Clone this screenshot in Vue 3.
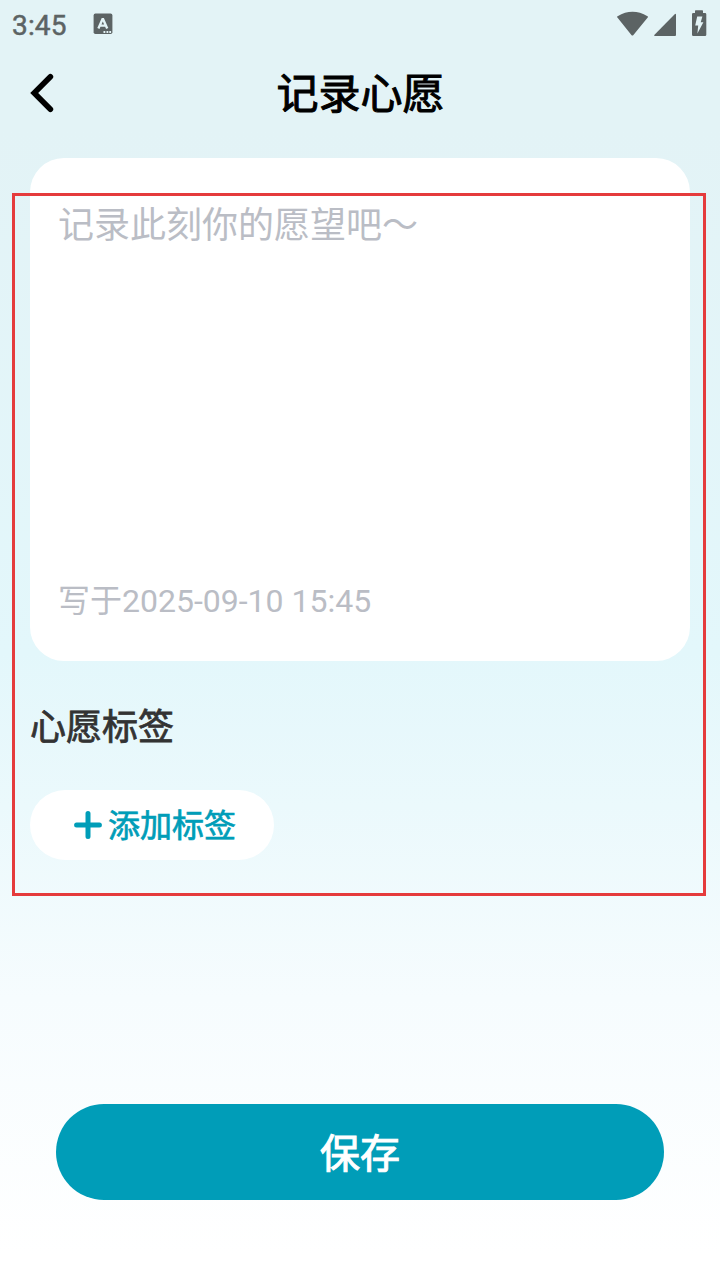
<script setup>
import { ref } from 'vue'

const time = ref('3:45')
const writtenAt = ref('2025-09-10 15:45')
</script>

<template>
  <div class="screen">
    <div class="status">
      <span class="clock">{{ time }}</span>
      <svg class="ime" width="20" height="22" viewBox="0 0 20 22">
        <rect x="0.6" y="0.6" width="18.8" height="20.4" rx="1.8" fill="#5c6364" />
        <path d="M5.4 15.6 L9.8 5.6 L14.2 15.6 M7 12.6 H12.6" fill="none" stroke="#e3f3f6" stroke-width="2.4" stroke-linejoin="bevel" />
        <path d="M10.5 19 h1.8 M13.5 19 h1.8 M16.3 19 h1.8" stroke="#e3f3f6" stroke-width="1.8" />
      </svg>
      <span class="spacer"></span>
      <svg class="indicators" width="92" height="30" viewBox="616 8 92 30">
        <path d="M617.4 17.6 Q616.6 16.8 617.6 16.2 Q632.5 7.4 647.5 16.2 Q648.4 16.8 647.7 17.6 L633.2 35.2 Q632.4 36 631.6 35.2 Z" fill="#5c6364" />
        <path d="M676 14.5 V35 Q676 36 675 36 H655 Q653.4 36 654.5 34.8 L674.7 14.2 Q676 13 676 14.5 Z" fill="#5c6364" />
        <path d="M695 11 Q695 10.3 695.7 10.3 H702.3 Q703 10.3 703 11 V13 H705 Q706.3 13 706.3 14.3 V34.8 Q706.3 36 705 36 H693.2 Q692 36 692 34.8 V14.3 Q692 13 693.2 13 H695 Z" fill="#5c6364" />
        <path d="M697.2 16.6 H702.4 L700.7 22.2 H703.4 L697.4 33.6 L698.2 25.6 H695.2 Z" fill="#e3f3f6" />
      </svg>
    </div>

    <header class="nav">
      <svg class="back" width="26" height="40" viewBox="0 0 26 40">
        <path d="M20.4 3.8 L4.2 20 L20.4 36.2" fill="none" stroke="#000" stroke-width="5.6" stroke-linecap="round" stroke-linejoin="miter" />
      </svg>
      <h1>记录心愿</h1>
    </header>

    <main>
      <section class="note">
        <p class="placeholder">记录此刻你的愿望吧～</p>
        <p class="date">写于{{ writtenAt }}</p>
      </section>
      <h2>心愿标签</h2>
      <button class="add">
        <svg width="28" height="28" viewBox="0 0 28 28">
          <path d="M2.6 14 H25.4 M14 2.6 V25.4" stroke="#009db8" stroke-width="5" stroke-linecap="round" />
        </svg>
        <span>添加标签</span>
      </button>
    </main>

    <button class="save"><span>保存</span></button>
    <div class="highlight"></div>
  </div>
</template>

<style>
html, body { margin: 0; overflow: hidden; }
</style>

<style scoped>
.screen {
  position: relative;
  box-sizing: border-box;
  width: 720px;
  height: 1280px;
  display: flex;
  flex-direction: column;
  font-family: Roboto, "Noto Sans CJK SC", sans-serif;
  background: linear-gradient(180deg, #e3f3f6 0%, #e3f3f6 10%, #e3f7fb 51%, #ebf9fc 63%, #f6fcfe 78%, #ffffff 98%);
}
h1, h2, p { margin: 0; font-weight: 400; }
button { border: 0; padding: 0; font: inherit; }
.status {
  display: flex;
  align-items: flex-start;
  height: 48px;
  padding: 0 12px;
  box-sizing: border-box;
}
.clock {
  width: 81px;
  margin-top: 10px;
  font-size: 28px;
  line-height: 32px;
  letter-spacing: 0.15px;
  color: #5c6364;
  -webkit-text-stroke: 0.5px #5c6364;
}
.ime { margin-top: 13px; }
.spacer { flex: 1; }
.indicators { margin-top: 8px; }
.nav {
  display: grid;
  grid-template-columns: 60px 1fr 60px;
  align-items: center;
  height: 90px;
}
.back { margin-left: 30px; }
.nav h1 {
  padding-top: 4px;
  padding-left: 1px;
  text-align: center;
  font-size: 42px;
  line-height: 60px;
  color: #000;
  -webkit-text-stroke: 1px #000;
}
main { padding: 20px 30px 0; }
.note {
  display: flex;
  flex-direction: column;
  justify-content: space-between;
  box-sizing: border-box;
  height: 503px;
  padding: 43px 28px 36px;
  border-radius: 34px;
  background: #fff;
  color: #babdc5;
}
.placeholder { font-size: 36px; line-height: 50px; }
.date { font-size: 32px; line-height: 48px; }
h2 {
  margin-top: 41px;
  font-size: 36px;
  line-height: 52px;
  color: #333;
  -webkit-text-stroke: 0.8px #333;
}
.add {
  display: flex;
  align-items: center;
  justify-content: center;
  gap: 6px;
  width: 244px;
  height: 70px;
  margin-top: 36px;
  padding-right: 6px;
  padding-left: 12px;
  border-radius: 35px;
  background: #fff;
  color: #009db8;
  font-size: 32px;
  line-height: 48px;
  -webkit-text-stroke: 0.7px #009db8;
}
.add svg { flex: none; }
.add span { padding-top: 2px; }
.save {
  width: 608px;
  height: 96px;
  margin: auto 56px 80px;
  padding-top: 5px;
  border-radius: 48px;
  background: #009db8;
  color: #fff;
  font-size: 40px;
  line-height: 60px;
  -webkit-text-stroke: 1px #fff;
}
.highlight {
  position: absolute;
  left: 12px;
  top: 193px;
  width: 694px;
  height: 703px;
  box-sizing: border-box;
  border: 3px solid #e53b3c;
  pointer-events: none;
}
</style>
